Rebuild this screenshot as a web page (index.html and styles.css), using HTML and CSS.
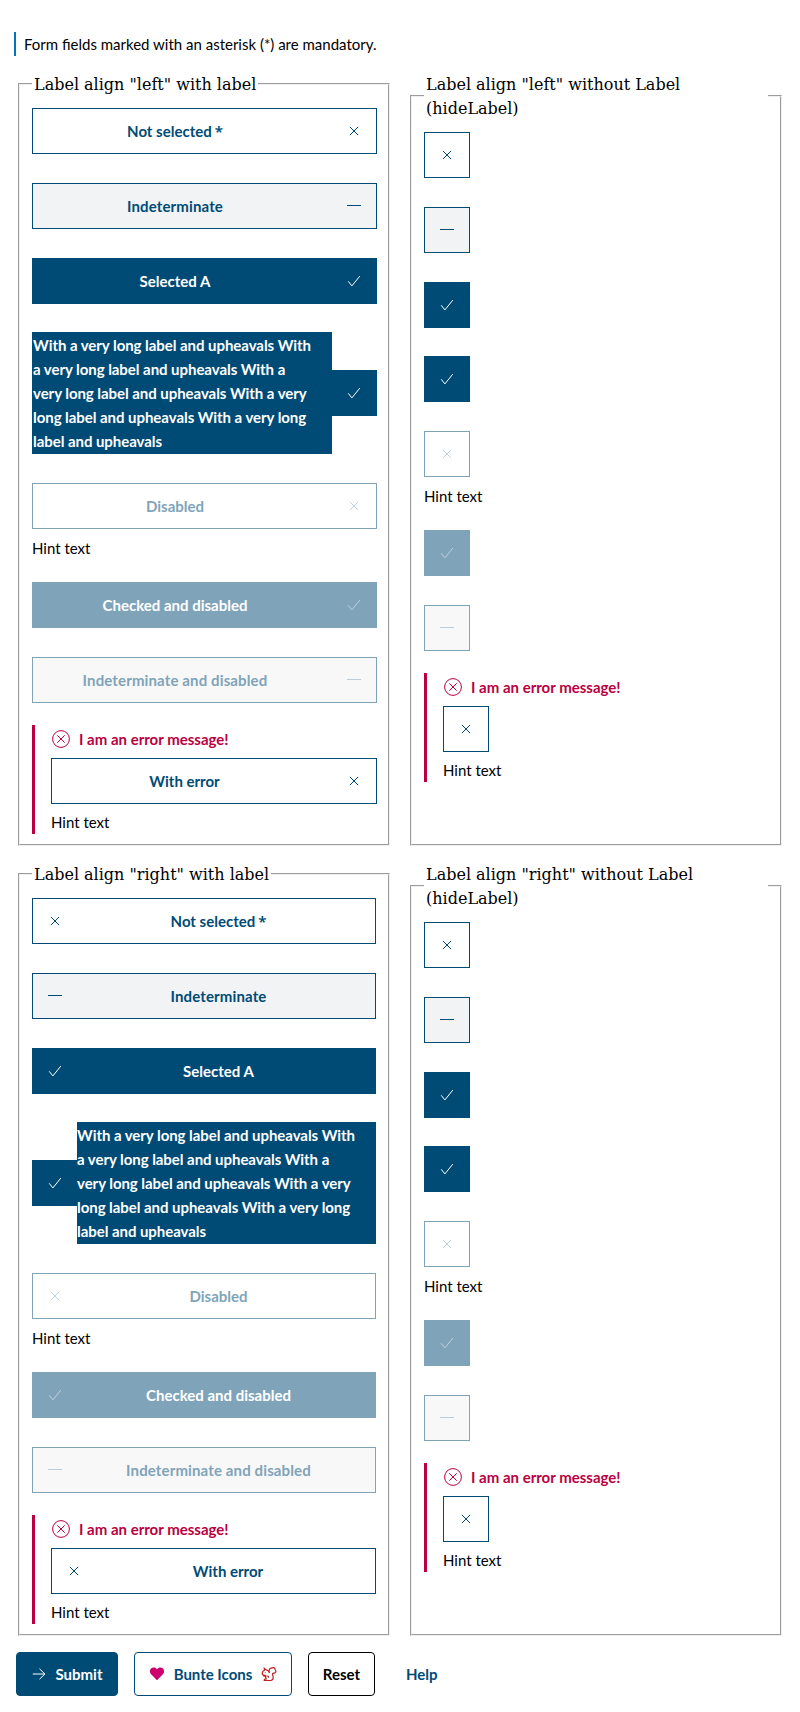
FILE: index.html
```html
<!DOCTYPE html>
<html lang="en">
<head>
<meta charset="utf-8">
<title>Toggle buttons</title>
<link rel="stylesheet" href="styles.css">
</head>
<body>
<svg class="sprite" aria-hidden="true">
  <symbol id="cross" viewBox="0 0 16 16"><path d="M3.9 3.9l8.2 8.2M12.1 3.9l-8.2 8.2"/></symbol>
  <symbol id="minus" viewBox="0 0 16 16"><path d="M1 7.5h14"/></symbol>
  <symbol id="check" viewBox="0 0 16 16"><path d="M2.2 8.3l3.7 4.600L13.9 3"/></symbol>
  <symbol id="error" viewBox="0 0 20 20"><circle cx="10" cy="10" r="8.4"/><path d="M6.3 6.3l7.4 7.4M13.7 6.3l-7.4 7.4"/></symbol>
</svg>
<form class="form">
  <p class="mandatory">Form fields marked with an asterisk (*) are mandatory.</p>
  <div class="grid">
    <fieldset class="group left">
      <legend>Label align "left" with label</legend>
      <div class="toggle"><span class="label">Not selected<span class="star">*</span></span><span class="state"><svg><use href="#cross"/></svg></span></div>
      <div class="toggle mixed"><span class="label">Indeterminate</span><span class="state"><svg><use href="#minus"/></svg></span></div>
      <div class="toggle on before-long"><span class="label">Selected A</span><span class="state"><svg><use href="#check"/></svg></span></div>
      <div class="toggle on long"><span class="label">With a very long label and upheavals With a very long label and upheavals With a very long label and upheavals With a very long label and upheavals With a very long label and upheavals</span><span class="state"><svg><use href="#check"/></svg></span></div>
      <div class="toggle disabled hinted"><span class="label">Disabled</span><span class="state"><svg><use href="#cross"/></svg></span></div>
      <p class="hint">Hint text</p>
      <div class="toggle on disabled"><span class="label">Checked and disabled</span><span class="state"><svg><use href="#check"/></svg></span></div>
      <div class="toggle mixed disabled before-error"><span class="label">Indeterminate and disabled</span><span class="state"><svg><use href="#minus"/></svg></span></div>
      <div class="invalid">
        <p class="message"><svg><use href="#error"/></svg>I am an error message!</p>
        <div class="toggle"><span class="label">With error</span><span class="state"><svg><use href="#cross"/></svg></span></div>
        <p class="hint">Hint text</p>
      </div>
    </fieldset>
    <fieldset class="group bare">
      <legend>Label align "left" without Label (hideLabel)</legend>
      <div class="toggle"><span class="state"><svg><use href="#cross"/></svg></span></div>
      <div class="toggle mixed"><span class="state"><svg><use href="#minus"/></svg></span></div>
      <div class="toggle on before-long"><span class="state"><svg><use href="#check"/></svg></span></div>
      <div class="toggle on"><span class="state"><svg><use href="#check"/></svg></span></div>
      <div class="toggle disabled hinted"><span class="state"><svg><use href="#cross"/></svg></span></div>
      <p class="hint">Hint text</p>
      <div class="toggle on disabled"><span class="state"><svg><use href="#check"/></svg></span></div>
      <div class="toggle mixed disabled before-error"><span class="state"><svg><use href="#minus"/></svg></span></div>
      <div class="invalid">
        <p class="message"><svg><use href="#error"/></svg>I am an error message!</p>
        <div class="toggle"><span class="state"><svg><use href="#cross"/></svg></span></div>
        <p class="hint">Hint text</p>
      </div>
    </fieldset>
    <fieldset class="group right">
      <legend>Label align "right" with label</legend>
      <div class="toggle"><span class="state"><svg><use href="#cross"/></svg></span><span class="label">Not selected<span class="star">*</span></span></div>
      <div class="toggle mixed"><span class="state"><svg><use href="#minus"/></svg></span><span class="label">Indeterminate</span></div>
      <div class="toggle on before-long"><span class="state"><svg><use href="#check"/></svg></span><span class="label">Selected A</span></div>
      <div class="toggle on long"><span class="state"><svg><use href="#check"/></svg></span><span class="label">With a very long label and upheavals With a very long label and upheavals With a very long label and upheavals With a very long label and upheavals With a very long label and upheavals</span></div>
      <div class="toggle disabled hinted"><span class="state"><svg><use href="#cross"/></svg></span><span class="label">Disabled</span></div>
      <p class="hint">Hint text</p>
      <div class="toggle on disabled"><span class="state"><svg><use href="#check"/></svg></span><span class="label">Checked and disabled</span></div>
      <div class="toggle mixed disabled before-error"><span class="state"><svg><use href="#minus"/></svg></span><span class="label">Indeterminate and disabled</span></div>
      <div class="invalid">
        <p class="message"><svg><use href="#error"/></svg>I am an error message!</p>
        <div class="toggle"><span class="state"><svg><use href="#cross"/></svg></span><span class="label">With error</span></div>
        <p class="hint">Hint text</p>
      </div>
    </fieldset>
    <fieldset class="group bare">
      <legend>Label align "right" without Label (hideLabel)</legend>
      <div class="toggle"><span class="state"><svg><use href="#cross"/></svg></span></div>
      <div class="toggle mixed"><span class="state"><svg><use href="#minus"/></svg></span></div>
      <div class="toggle on before-long"><span class="state"><svg><use href="#check"/></svg></span></div>
      <div class="toggle on"><span class="state"><svg><use href="#check"/></svg></span></div>
      <div class="toggle disabled hinted"><span class="state"><svg><use href="#cross"/></svg></span></div>
      <p class="hint">Hint text</p>
      <div class="toggle on disabled"><span class="state"><svg><use href="#check"/></svg></span></div>
      <div class="toggle mixed disabled before-error"><span class="state"><svg><use href="#minus"/></svg></span></div>
      <div class="invalid">
        <p class="message"><svg><use href="#error"/></svg>I am an error message!</p>
        <div class="toggle"><span class="state"><svg><use href="#cross"/></svg></span></div>
        <p class="hint">Hint text</p>
      </div>
    </fieldset>
  </div>
  <div class="actions">
    <button type="button" class="btn primary"><svg viewBox="0 0 16 16"><path d="M1.8 8h12.1M8.5 2.8L13.9 8l-5.4 5.2"/></svg>Submit</button>
    <button type="button" class="btn colored"><svg class="heart" viewBox="0 0 16 16"><path d="M8 14.2L1.9 8C.5 6.6.6 4 2 2.5 3.6.9 6.6.9 8 3.2 9.4.9 12.4.9 14 2.5 15.4 4 15.5 6.6 14.1 8z"/></svg>Bunte Icons<svg class="squirrel" viewBox="0 0 16 16"><path d="M8.500 7C7.600 4.500 8.300 2 10.300 2.200 11.800 1 14.300 1.500 14.100 3.600 15.400 5 15 7.200 13.300 7.200 12.300 7.200 12 7 11.500 7.700 10.900 8.800 12.500 9.600 12.200 11.800 12.100 13.400 11 14.500 9.500 14.500H3.200C3 13.200 4 12.800 5.200 12.800 4.300 11.600 4.500 10.500 5.200 9.600 4 10.500 2.800 10.400 2.300 9.500M5.200 9.600C3 9.600 1 9 1.200 7.300 1.300 5.700 2.300 4.700 3.400 4.300L3.300 2.300 5.200 3.900C6.900 4.200 8 5.200 8.500 7M6 10c1.200 0 1.700.6 1.700 1.700M3.900 6.600h.6"/></svg></button>
    <button type="button" class="btn plain">Reset</button>
    <a class="help">Help</a>
  </div>
</form>
</body>
</html>
```
FILE: styles.css
```css
* { box-sizing: border-box; }

body {
  margin: 0;
  background: #fff;
  color: #000;
  font: 15px/24px Lato, "Open Sans", sans-serif;
}

p { margin: 0; }

.sprite { display: none; }

svg {
  display: block;
  flex: none;
  width: 16px;
  height: 16px;
  fill: none;
  stroke: currentColor;
  stroke-width: 1;
}

.form { padding: 32px 16px 16px; }

.mandatory {
  height: 24px;
  margin: 0 0 16px -2px;
  padding-left: 8px;
  border-left: 2px solid #0077b6;
  white-space: nowrap;
}

.grid {
  display: grid;
  grid-template-columns: 376px 376px;
  gap: 16px;
}

.group {
  min-width: 0;
  margin: 0 2px;
  padding: 12px 12px 10px;
  border: 2px groove #f0f0f0;
}

.group legend {
  padding: 0 2px;
  font: 16px/24px "DejaVu Serif", serif;
  transform: translateY(1px);
}

.toggle {
  --border: #004b76;
  --fill: #fff;
  display: flex;
  align-items: center;
  height: 46px;
  margin-bottom: 29px;
  background: var(--fill);
  border: 1px solid var(--border);
  color: #004b76;
  font-weight: 700;
}

.left .toggle { margin-right: -1px; }
.bare .toggle { width: 46px; }

.mixed { --fill: #f1f3f4; letter-spacing: .13px; }
.on { --fill: #004b76; color: #fff; }
.disabled { --border: #7fa4ba; color: #7fa4ba; }
.disabled.mixed { --fill: #f8f8f8; }
.disabled.on { --fill: #7fa4ba; color: #fff; }
.disabled .state { opacity: .5; }

.label {
  flex: 1;
  padding-right: 15px;
  text-align: center;
}

.star {
  margin-left: 3px;
  font: 600 15px/20px "Noto Sans", sans-serif;
}

.state {
  display: flex;
  flex: 0 0 44px;
  justify-content: center;
}

.long {
  height: 122px;
  background: none;
  border: 0;
}

.long .label {
  padding: 1px 15px 1px 1px;
  background: var(--fill);
  letter-spacing: -.05px;
  text-align: left;
}

.right .long .label { padding-left: 0; }

.long .state {
  flex-basis: 45px;
  align-items: center;
  height: 46px;
  background: var(--fill);
}

.left .long .state { padding-right: 1px; }
.left .long .label { flex: 0 0 300px; }

.before-long { margin-bottom: 28px; }
.hinted { margin-bottom: 8px; }
.before-error { margin-bottom: 22px; }

.hint {
  height: 24px;
  margin-bottom: 21px;
  line-height: 22px;
}

.invalid {
  height: 109px;
  padding: 2px 0 0 16px;
  border-left: 3px solid #b90041;
}

.message {
  display: flex;
  align-items: center;
  gap: 8px;
  height: 24px;
  margin-bottom: 7px;
  color: #b90041;
  font-weight: 700;
}

.message svg { width: 20px; height: 20px; }

.invalid .toggle { margin-bottom: 7px; }
.invalid .hint { margin-bottom: 0; }

.actions { display: flex; margin-top: 16px; }

.btn {
  display: flex;
  align-items: center;
  justify-content: center;
  height: 44px;
  margin-right: 16px;
  padding: 0;
  border: 1px solid #004b76;
  border-radius: 4px;
  background: #fff;
  color: #004b76;
  font: 700 15px/24px Lato, "Open Sans", sans-serif;
}

.primary { width: 102px; gap: 8px; background: #004b76; color: #fff; }
.colored { width: 158px; gap: 8.6px; }
.plain { width: 67px; border-color: #000; color: #000; }
.heart { fill: #cc006e; stroke: none; }
.squirrel { color: #c0201f; stroke-width: 1.2; }

.help {
  margin-left: 15px;
  color: #004b76;
  font-weight: 700;
  line-height: 44px;
}
```
